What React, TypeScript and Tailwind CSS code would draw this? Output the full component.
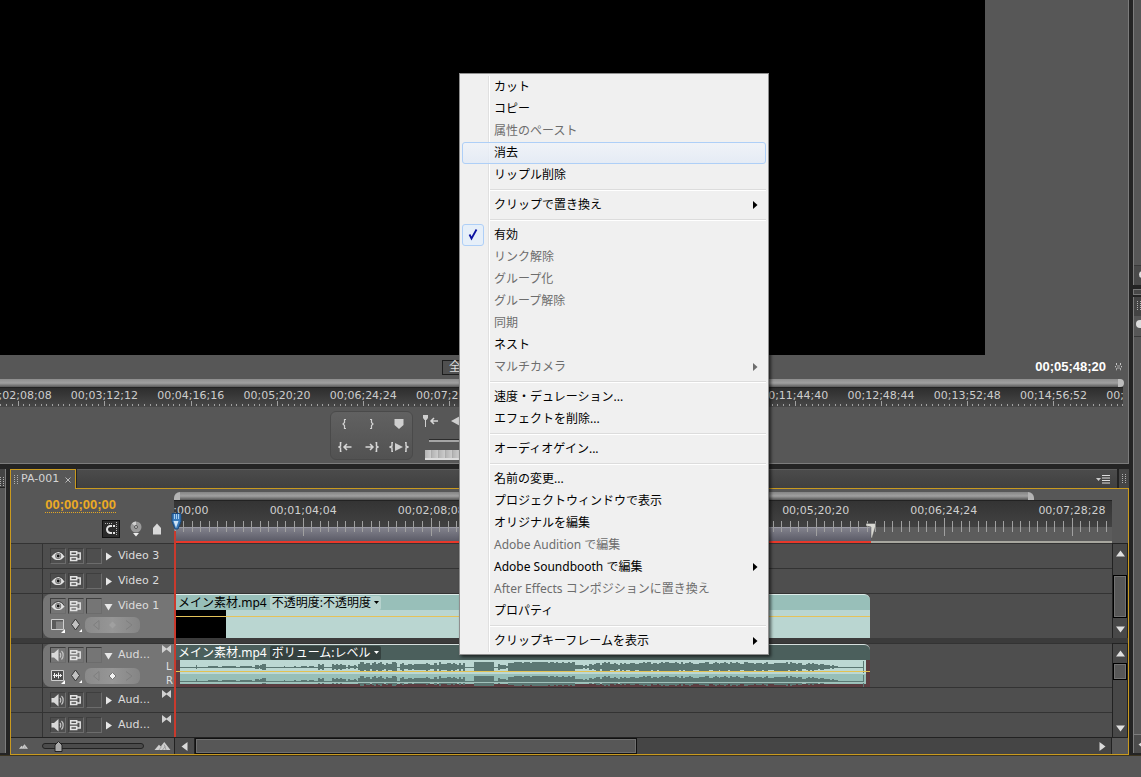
import { ReactNode } from "react";
import clsx from "clsx";

type MenuEntry = { label: string; disabled?: boolean; submenu?: boolean; checked?: boolean; active?: boolean } | "sep";

const MENU: MenuEntry[] = [
  { label: "カット" },
  { label: "コピー" },
  { label: "属性のペースト", disabled: true },
  { label: "消去", active: true },
  { label: "リップル削除" },
  "sep",
  { label: "クリップで置き換え", submenu: true },
  "sep",
  { label: "有効", checked: true },
  { label: "リンク解除", disabled: true },
  { label: "グループ化", disabled: true },
  { label: "グループ解除", disabled: true },
  { label: "同期", disabled: true },
  { label: "ネスト" },
  { label: "マルチカメラ", disabled: true, submenu: true },
  "sep",
  { label: "速度・デュレーション..." },
  { label: "エフェクトを削除..." },
  "sep",
  { label: "オーディオゲイン..." },
  "sep",
  { label: "名前の変更..." },
  { label: "プロジェクトウィンドウで表示" },
  { label: "オリジナルを編集" },
  { label: "Adobe Audition で編集", disabled: true },
  { label: "Adobe Soundbooth で編集", submenu: true },
  { label: "After Effects コンポジションに置き換え", disabled: true },
  { label: "プロパティ" },
  "sep",
  { label: "クリップキーフレームを表示", submenu: true },
];

const MONITOR_TIMES = [
  "00;02;08;08", "00;03;12;12", "00;04;16;16", "00;05;20;20", "00;06;24;24", "00;07;28;28", "00;08;32;32",
  "00;09;36;36", "00;10;40;38", "00;11;44;40", "00;12;48;44", "00;13;52;48", "00;14;56;52", "00;16;00;56",
];

const SEQUENCE_TIMES = [
  "00;00;00;00", "00;01;04;04", "00;02;08;08", "00;03;12;12", "00;04;16;16", "00;05;20;20", "00;06;24;24", "00;07;28;28",
];

// start, end, amplitude, jitter (px along the clip)
const WAVE_SEGMENTS: [number, number, number, number][] = [
  [20, 21, 2, 0], [32, 42, 1, 1], [46, 60, 1, 1], [64, 76, 1, 1], [79, 84, 2, 1], [84, 90, 4, 2],
  [108, 109, 1, 0], [118, 120, 1, 0], [125, 131, 1, 1], [133, 138, 1, 1], [142, 148, 3, 1], [163, 164, 1, 0],
  [156, 170, 3, 1], [172, 181, 2, 1], [182, 221, 5, 3], [224, 242, 4, 2], [242, 259, 4, 2], [259, 289, 5, 3],
  [298, 318, 5, 0], [322, 332, 3, 2], [332, 399, 5, 1], [399, 414, 3, 2], [414, 455, 5, 3], [455, 544, 5, 2],
  [544, 626, 5, 2], [626, 648, 4, 2], [648, 662, 2, 1], [687, 688, 6, 0],
];

function wavePath(center: number) {
  let d = `M4 ${center}h684v1h-684z`;
  for (const [from, to, amp, jitter] of WAVE_SEGMENTS) {
    for (let x = from; x < to; x += 2) {
      const noise = Math.abs(Math.sin(x * 12.9898) * 43758.5453) % 1;
      const a = Math.max(1, amp - Math.round(noise * jitter));
      d += `M${x} ${center - a}h${to - x < 2 ? 1 : 2}v${a * 2}h-${to - x < 2 ? 1 : 2}z`;
    }
  }
  return d;
}

/* ---------- icons ---------- */

const EyeIcon = () => (
  <svg width="14" height="14" viewBox="0 0 14 14" className="shrink-0">
    <path d="M0.500 7.500C3 4 5 3 7.300 3S11.500 4.500 13.500 7.500C11 10.500 9.300 11 7 11S2.500 10.500 0.500 7.500z" fill="#e2e2e2" />
    <circle cx="7.200" cy="7" r="3" fill="#6a6a6a" />
    <circle cx="7.200" cy="7" r="2.200" fill="#b5b5b5" />
    <circle cx="7.200" cy="7" r="1.400" fill="#161616" />
    <path d="M1 6.500C3 3.500 5.500 2.500 7.500 2.500S12 4 13 6.500" fill="none" stroke="#444" />
  </svg>
);

const SpeakerIcon = () => (
  <svg width="14" height="14" viewBox="0 0 14 14" className="shrink-0">
    <path d="M0.500 5h2.500L7.500 1v12.500L3 9.500H0.500z" fill="#d8d8d8" />
    <path d="M9 5c1 1 1 3.500 0 4.500M10.500 3c2.200 2 2.200 6.500 0 8.500" fill="none" stroke="#c6c6c6" strokeWidth="1.200" />
  </svg>
);

const FilmIcon = () => (
  <svg width="14" height="14" viewBox="0 0 14 14" fill="none" stroke="#e2e2e2" strokeWidth="1.500" className="shrink-0">
    <path d="M1.700 2.700h6v3h-6zM1.700 8.500h6v3h-6zM7.700 4h3.500v6H7.700" />
  </svg>
);

const Tri = ({ open }: { open?: boolean }) => (
  <svg width="9" height="9" viewBox="0 0 9 9">
    <path d={open ? "M0.500 2h8L4.500 8.500z" : "M2 0.500v8L8 4.500z"} fill="#e8e8e8" />
  </svg>
);

const ArrowUp = () => <svg width="11" height="7" viewBox="0 0 11 7"><path d="M5.500 0.500L10 6.500H1z" fill="#e0e0e0" /></svg>;
const ArrowDown = () => <svg width="11" height="7" viewBox="0 0 11 7"><path d="M5.500 6.500L10 0.500H1z" fill="#e0e0e0" /></svg>;

const BowTie = () => (
  <svg width="9" height="8" viewBox="0 0 9 8"><path d="M0 0l4.500 3.500L9 0v8L4.500 4.500 0 8z" fill="#d0d0d0" /></svg>
);

const Grip = () => (
  <svg width="4" height="10" viewBox="0 0 4 10" fill="#b0b0b0" shapeRendering="crispEdges">
    {[0, 2, 4, 6, 8].map((y) => (
      <path key={y} d={`M0 ${y}h1v1h-1zM3 ${y}h1v1h-1z`} />
    ))}
  </svg>
);

const Mountains = ({ w, h }: { w: number; h: number }) => (
  <svg width={w} height={h} viewBox="0 0 18 9">
    <path d="M0 9L5 3l2 2 4-5 7 9z" fill="#cfcfcf" />
    <path d="M5 9l3-4M9 9l3-4M13 9L11 3" stroke="#999" fill="none" />
  </svg>
);

/* ---------- shared pieces ---------- */

function Cell({ label, children }: { label: string; children?: ReactNode }) {
  return (
    <button aria-label={label} className="flex size-4 items-center justify-center border border-[#3f3f3f] border-r-[#6c6c6c] border-b-[#6c6c6c]">
      {children}
    </button>
  );
}

function Ticks({ top, bottom, majorTop, majorBottom }: { top: number; bottom: number; majorTop: number; majorBottom: number }) {
  return (
    <svg className="absolute inset-0 size-full" shapeRendering="crispEdges">
      {Array.from({ length: 15 }, (_, i) => {
        const x = `${((i + 0.5) / 15) * 100}%`;
        const major = i === 7;
        return <line key={i} x1={x} x2={x} y1={major ? majorTop : top} y2={major ? majorBottom : bottom} stroke="#a0a0a0" />;
      })}
    </svg>
  );
}

function ScrollColumn({ label, before, thumb }: { label: string; before: string; thumb: string }) {
  return (
    <div className="flex w-[16px] shrink-0 flex-col border-x border-t border-[#222] bg-[#484848]">
      <button aria-label={`${label} up`} className="flex h-[18px] items-center justify-center"><ArrowUp /></button>
      <div className={before} />
      <div className={clsx("border border-black bg-[#575757] outline-1 -outline-offset-2 outline-[#727272]", thumb)} />
      <div className="flex-1" />
      <button aria-label={`${label} down`} className="flex h-[18px] items-center justify-center"><ArrowDown /></button>
    </div>
  );
}

function KeyframeRow({ audio }: { audio?: boolean }) {
  return (
    <div className="flex items-center">
      <button aria-label="Display style" className="w-4">
        <svg width="16" height="16" viewBox="0 0 16 16">
          <path d="M1.500 2.500h12v10h-12z" fill={audio ? "#4c4c4c" : "#848484"} stroke="#d0d0d0" />
          {audio ? (
            <path d="M3 7.500h9M4.500 5v5M6.500 6v3M8.500 4.500v6M10.500 6v3" stroke="#eee" />
          ) : (
            <path d="M2 3h11v1.500H2zM2 4h4v8H2z" fill="#5a5a5a" />
          )}
          <path d="M15 12v4h-4z" fill="#fff" />
        </svg>
      </button>
      <button aria-label="Show keyframes" className="ml-[3px] w-4">
        <svg width="16" height="16" viewBox="0 0 16 16">
          <path d="M6.500 2L10.500 7.500 6.500 13 2.500 7.500z" fill="#c2c2c2" stroke="#383838" />
          <path d="M13 12v3h-3z" fill="#fff" />
        </svg>
      </button>
      <div className="flex h-4 w-[55px] items-center justify-center rounded-md bg-linear-to-r from-[#8a8a8a] via-[#969696] to-[#858585]">
        <svg width="41" height="12" viewBox="0 0 41 12">
          <path d="M7 1.500v9L1.500 6zM34 1.500L40 6l-6 4.500" fill="none" stroke="#7f7f7f" />
          <path d="M20.500 2.500L24 6l-3.500 3.500L17 6z" fill={audio ? "#f2f2f2" : "#a0a0a0"} stroke={audio ? "#777" : "none"} />
        </svg>
      </div>
    </div>
  );
}

function Track({ name, audio, open, children }: { name: string; audio?: boolean; open?: boolean; children?: ReactNode }) {
  return (
    <div className={clsx("flex border-t border-[#333]", !open && "h-[25px]", open && (audio ? "h-[44px]" : "h-[45px]"))}>
      <div className="w-8 shrink-0 border-r border-[#333]" />
      <div
        className={clsx(
          "flex w-[132px] shrink-0 flex-col gap-[3px] border-r border-[#333] pl-[7px]",
          audio && open ? "pt-[3px]" : "pt-1",
          open && "rounded-l-lg bg-[#757575]",
        )}
      >
        <div className="flex items-center gap-[2px]">
          <Cell label={audio ? "Toggle audio output" : "Toggle video output"}>{audio ? <SpeakerIcon /> : <EyeIcon />}</Cell>
          <Cell label="Sync lock"><FilmIcon /></Cell>
          <Cell label="Track lock" />
          <button aria-label={open ? "Collapse" : "Expand"}><Tri open={open} /></button>
          <span className="ml-[3px] flex-1 text-[11px] leading-4 text-[#dcdcdc]">{name}</span>
          {audio && <span className="-mt-3 mr-[3px]"><BowTie /></span>}
        </div>
        {open && (
          <div className="flex justify-between">
            <KeyframeRow audio={audio} />
            {audio && (
              <div className="-mt-1 mr-px flex flex-col gap-1 text-[10px] leading-[10px] text-[#e0e0e0]">
                <span>L</span>
                <span>R</span>
              </div>
            )}
          </div>
        )}
      </div>
      <div className="min-w-0 flex-1 bg-[#4e4e4e]">{children}</div>
    </div>
  );
}

function ClipTitle({ effect, dark }: { effect: string; dark?: boolean }) {
  return (
    <div
      className={clsx(
        "flex h-4 items-center gap-[3px] rounded-tr-md border-t pl-[2px] font-['Noto_Sans','Noto_Sans_CJK_JP',sans-serif] text-[12px] whitespace-nowrap",
        dark ? "border-[#d5dfdd] bg-[#4b5f5c] text-white" : "border-[#dcebe8] bg-[#98bfb9] text-black",
      )}
    >
      <span className="leading-[14px]">メイン素材.mp4</span>
      <button className={clsx("flex h-[14px] items-center gap-[3px] rounded-xs px-[2px] leading-[14px]", dark ? "bg-[#35413f]" : "bg-[#b6d2cd]")}>
        {effect}
        <svg width="5" height="3" viewBox="0 0 5 3"><path d="M0 0h5L2.500 3z" fill="currentColor" /></svg>
      </button>
    </div>
  );
}

/* ---------- panels ---------- */

function MonitorPanel() {
  return (
    <section className="border-r border-b border-[#7c7c7c] bg-[#575757]">
      <div className="mr-[143px] h-[355px] bg-black" />
      <div className="flex h-6 items-center justify-end pr-[5px]">
        <div className="flex flex-1 pl-[442px]">
          <button className="h-[15px] w-[90px] border border-[#1d1d1d] bg-[#505050] pl-[6px] text-left text-[12px] leading-[13px] text-[#ddd]">全体表示</button>
        </div>
        <span className="font-['Liberation_Sans',sans-serif] text-[13px] leading-4 font-bold text-white">00;05;48;20</span>
        <svg className="ml-2" width="9" height="10" viewBox="0 0 9 10">
          <path d="M3 3h3v4H3z" fill="#808080" />
          <path d="M2.500 1v2.500L1 5l1.500 1.500V9M6.500 1v2.500L8 5 6.500 6.500V9" stroke="#c4c4c4" fill="none" strokeDasharray="2 1" />
        </svg>
      </div>
      <div className="mr-1 h-2 rounded-r-md border-r-6 border-[#bdbdbd] bg-linear-to-b from-[#8e8e8e] via-[#a0a0a0] to-[#5a5a5a]" />
      <div className="mr-[5px] h-5 overflow-hidden border-t border-[#232323] bg-linear-to-b from-[#2e2e2e] to-[#484848]">
        <div className="-mr-[60px] -ml-[25px] grid grid-cols-14">
          {MONITOR_TIMES.map((t) => (
            <div key={t} className="relative h-[19px] text-center text-[11px] leading-[15px] text-[#cdcdcd]">
              {t}
              <Ticks top={16} bottom={18} majorTop={13} majorBottom={18} />
            </div>
          ))}
        </div>
      </div>
      <div className="flex h-14 items-start gap-2 pt-1 pl-[330px]">
        <div className="grid h-[49px] w-[83px] grid-cols-3 items-center justify-items-center rounded-md border border-[#4a4a4a] bg-linear-to-b from-[#616161] to-[#525252]">
          <button aria-label="Set in point"><svg width="8" height="10" viewBox="0 0 8 10"><path d="M5 0.500H3.500v3L2 5l1.500 1.500v3H5" stroke="#d0d0d0" strokeWidth="1.200" fill="none" /></svg></button>
          <button aria-label="Set out point"><svg width="8" height="10" viewBox="0 0 8 10"><path d="M2 0.500h1.500v3L5 5 3.500 6.500v3H2" stroke="#d0d0d0" strokeWidth="1.200" fill="none" /></svg></button>
          <button aria-label="Set marker"><svg width="10" height="10" viewBox="0 0 10 10"><path d="M0.500 0h9v6L5 10 0.500 6z" fill="#cfcfcf" /></svg></button>
          <button aria-label="Go to in point"><svg width="14" height="10" viewBox="0 0 14 10"><path d="M3.500 0.500H2.500v3.500L1 5l1.500 1v3.500h1M13.500 5H6M9 2L6 5l3 3" stroke="#d6d6d6" strokeWidth="1.500" fill="none" /></svg></button>
          <button aria-label="Go to out point"><svg width="14" height="10" viewBox="0 0 14 10"><path d="M10.500 0.500h1v3.500l1.500 1-1.500 1v3.500h-1M0.500 5H8M5 2l3 3-3 3" stroke="#d6d6d6" strokeWidth="1.500" fill="none" /></svg></button>
          <button aria-label="Play in to out"><svg width="20" height="10" viewBox="0 0 20 10"><path d="M4 0.500H3v3.500L1 5l2 1v3.500h1M16 0.500h1v3.500l2 1-2 1v3.500h-1" stroke="#d6d6d6" strokeWidth="1.400" fill="none" /><path d="M6 1l8 4-8 4z" fill="#cfcfcf" /></svg></button>
        </div>
        <div className="flex w-[200px] flex-col">
          <div className="flex h-5 items-center gap-3">
            <button aria-label="Previous marker" className="ml-px"><svg width="16" height="12" viewBox="0 0 16 12"><path d="M1 0h5v3L4.500 5h-2L1 3zM3 5h1v7H3z" fill="#cfcfcf" /><path d="M16 6H9M12 3L9 6l3 3" stroke="#d6d6d6" strokeWidth="1.500" fill="none" /></svg></button>
            <button aria-label="Step back"><svg width="12" height="12" viewBox="0 0 12 12"><path d="M12 0v12L1 6z" fill="#d0d0d0" /></svg></button>
          </div>
          <div className="mt-2 ml-2 h-[3px] border-t border-[#2c2c2c] bg-[#a5a5a5]" />
          <div className="mt-2 ml-1 h-[10px] border-b-2 border-[#ddd] bg-[repeating-linear-gradient(90deg,#b4b4b4_0px,#cccccc_6px,#8a8a8a_7px)]" />
        </div>
      </div>
    </section>
  );
}

function TimelineHeader() {
  return (
    <div className="flex h-[54px]">
      <div className="flex w-[163px] shrink-0 flex-col items-end pt-[9px] pr-3">
        <button className="mr-[46px] border-b border-dotted border-[#e5a823] font-['Liberation_Sans',sans-serif] text-[13px] leading-[14px] font-bold text-[#edab24]">
          00;00;00;00
        </button>
        <div className="mt-[7px] flex items-center gap-[9px]">
          <button aria-label="Snap" className="flex size-[18px] items-center justify-center border border-[#111] bg-[#2b2b2b]">
            <svg width="16" height="16" viewBox="0 0 16 16" className="shrink-0"><path d="M12 5H7.500a3.400 3.400 0 000 7H12" stroke="#e2e2e2" strokeWidth="2" fill="none" /><path d="M9.500 3.500v3M9.500 10.500v3" stroke="#2b2b2b" /><path d="M13.500 1v14M2 2.500h7" stroke="#b5b5b5" strokeDasharray="1 1" /></svg>
          </button>
          <button aria-label="Set encore chapter marker">
            <svg width="14" height="16" viewBox="0 0 14 16"><circle cx="7" cy="6" r="5.500" fill="#9a9a9a" /><path d="M7 6L3 2.500A5.500 5.500 0 017 0.500z" fill="#d0d0d0" /><circle cx="7" cy="6" r="1.500" fill="#ccc" stroke="#555" /><path d="M4 12h6l-3 3.500z" fill="#eee" /></svg>
          </button>
          <button aria-label="Set unnumbered marker">
            <svg width="10" height="12" viewBox="0 0 10 12"><path d="M1 5l4-4.500L9 5v6.500H1z" fill="#d8d8d8" /></svg>
          </button>
        </div>
      </div>
      <div className="flex min-w-0 flex-1 flex-col pt-[3px]">
        <div className="mr-[78px] h-2 rounded-t-md border-x-6 border-[#b4b4b4] bg-linear-to-b from-[#858585] via-[#a0a0a0] to-[#555]" />
        <div className="relative flex-1 overflow-hidden">
          <div className="h-[27px] border-t border-[#222] bg-linear-to-b from-[#343434] to-[#424242]" />
          <div className="flex h-[14px] bg-[#5c5c5c]">
            <div className="w-[697px] border-t border-[#9a9aa5] bg-linear-to-b from-[#82828c] to-[#5c5c68]" />
          </div>
          <div className="flex h-[2px]">
            <div className="w-[697px] bg-[#e8382a]" />
            <div className="flex-1 bg-[#a8a79f]" />
          </div>
          <div className="absolute inset-x-0 top-0 overflow-hidden">
            <div className="-mr-[24px] -ml-[63px] grid grid-cols-8">
              {SEQUENCE_TIMES.map((t) => (
                <div key={t} className="relative h-9 pt-[3px] text-center text-[11px] leading-4 text-[#d0d0d0]">
                  {t}
                  <Ticks top={21} bottom={32} majorTop={18} majorBottom={36} />
                </div>
              ))}
            </div>
          </div>
          {/* work area end handle */}
          <svg className="absolute top-[23px] left-[692px]" width="10" height="16" viewBox="0 0 10 16">
            <path d="M0 0.500h9.500v3L6 15H5V4L0 3z" fill="#d8d8d2" stroke="#555" strokeWidth="0.500" />
          </svg>
        </div>
      </div>
      <div className="w-4 shrink-0" />
    </div>
  );
}

function TimelinePanel() {
  return (
    <section className="flex min-w-0 flex-1 flex-col">
      <div className="flex h-[19px] items-stretch">
        <div className="z-10 -mb-px flex w-[66px] items-center gap-[3px] border border-b-0 border-[#c99a1f] bg-[#575757] pl-[3px] text-[11px] text-[#d4d4d4]">
          <Grip />
          PA-001
          <button aria-label="Close" className="ml-[3px]">
            <svg width="6" height="6" viewBox="0 0 6 6"><path d="M0.500 0.500l5 5M5.500 0.500l-5 5" stroke="#bbb" /></svg>
          </button>
        </div>
        <div className="ml-px flex flex-1 items-center justify-end border-t border-[#5c5c5c] bg-linear-to-b from-[#4b4b4b] to-[#404040] pr-[7px]">
          <button aria-label="Panel menu">
            <svg width="14" height="9" viewBox="0 0 14 9"><path d="M0 3h5L2.500 6z" fill="#ccc" /><path d="M6 .5h8M6 3h8M6 5.500h8M6 8h8" stroke="#ddd" /></svg>
          </button>
        </div>
        <div className="flex w-3 items-center justify-center border-l-2 border-[#222] bg-[#454545]"><Grip /></div>
      </div>

      <div className="relative flex flex-col border border-[#c99a1f] bg-[#4e4e4e]">
        <div className="bg-[#575757]"><TimelineHeader /></div>

        <div className="flex">
          <div className="min-w-0 flex-1">
            <Track name="Video 3" />
            <Track name="Video 2" />
            <Track name="Video 1" open>
              <div className="ml-px flex h-[44px] w-[694px] flex-col">
                <ClipTitle effect="不透明度:不透明度" />
                <div className="relative flex flex-1 bg-[#bad6d1]">
                  <div className="w-[50px] bg-black" />
                  <div className="absolute inset-x-0 top-[6px] h-px bg-[#e5c25a]" />
                </div>
              </div>
            </Track>
          </div>
          <ScrollColumn label="Video tracks" before="h-[13px]" thumb="h-[43px]" />
        </div>

        <div className="h-[5px] bg-[#3b3b3b]" />

        <div className="flex">
          <div className="min-w-0 flex-1">
            <Track name="Aud..." audio open>
              <div className="ml-px w-[694px]">
                <ClipTitle effect="ボリューム:レベル" dark />
                <svg className="block w-full" height="27" viewBox="0 0 694 27" preserveAspectRatio="none" shapeRendering="crispEdges">
                  <rect width="694" height="27" fill="#5b3d41" />
                  <rect x="4" width="686" height="14" fill="#bcd8d3" />
                  <rect x="4" y="14" width="686" height="10" fill="#97bfb8" />
                  <path d={wavePath(7)} fill="#5b7773" />
                  <path d={wavePath(21)} fill="#5b7773" />
                  <rect x="4" y="22" width="686" height="1" fill="#a3c2bc" />
                  <rect y="11" width="694" height="1" fill="#e3c251" />
                </svg>
              </div>
            </Track>
            <Track name="Aud..." audio />
            <Track name="Aud..." audio />
          </div>
          <ScrollColumn label="Audio tracks" before="h-px" thumb="h-[17px]" />
        </div>

        <div className="flex h-[17px] border-t border-[#222] bg-[#575757]">
          <div className="flex w-[163px] shrink-0 items-center pl-2">
            <Mountains w={9} h={5} />
            <div className="relative mr-[10px] ml-[14px] h-[6px] w-[102px] rounded-sm border border-[#222] bg-[#4b4b4b]">
              <svg className="absolute -top-[3px] left-[11px]" width="9" height="11" viewBox="0 0 9 11"><path d="M1 4l3.500-3.500L8 4v6.500H1z" fill="#aaa" stroke="#222" /></svg>
            </div>
            <Mountains w={17} h={8} />
          </div>
          <button aria-label="Scroll left" className="flex w-[21px] items-center justify-center border-x border-[#222] bg-[#4c4c4c]">
            <svg width="7" height="9" viewBox="0 0 7 9"><path d="M6.500 0v9L0.500 4.500z" fill="#dadada" /></svg>
          </button>
          <div className="flex flex-1 bg-[#454545]">
            <div className="w-[442px] border border-[#111] bg-[#575757] outline-1 -outline-offset-2 outline-[#707070]" />
          </div>
          <button aria-label="Scroll right" className="flex w-[19px] items-center justify-center border-r border-[#222] bg-[#454545]">
            <svg width="7" height="9" viewBox="0 0 7 9"><path d="M0.500 0v9L6.500 4.500z" fill="#dadada" /></svg>
          </button>
          <div className="w-4" />
        </div>

        {/* playhead */}
        <div className="absolute top-[24px] bottom-[17px] left-[160px] z-10 flex w-[11px] flex-col">
          <svg className="shrink-0" width="11" height="18" viewBox="0 0 11 18">
            <path d="M1 0.500h9v8L7 16H4L1 8.500z" fill="#3979b8" stroke="#1d4878" />
            <path d="M3.500 1v5M5.500 1v5M7.500 1v5" stroke="#a6cdf0" />
            <path d="M2.500 8h5l-2.500 7z" fill="#cfe3f5" />
          </svg>
          <div className="ml-[3px] w-[2px] flex-1 bg-[#c93a2d]" />
        </div>
      </div>
    </section>
  );
}

function SidePanel() {
  return (
    <aside className="flex w-3 shrink-0 flex-col border-l-4 border-[#242424] bg-[#242424]">
      <div className="h-[285px] overflow-hidden border-l border-[#7c7c7c] bg-[#575757] pt-[265px]">
        <div className="border-t border-[#3a3a3a] bg-[#4a4a4a] pt-[5px] pb-2 pl-[5px]"><div className="size-[7px] rounded-full bg-[#ddd]" /></div>
      </div>
      <div className="mt-1 h-[6px] border border-r-0 border-[#777] bg-[#484848]" />
      <div className="mt-[2px] flex-1 overflow-hidden border-l border-[#7c7c7c] bg-[#575757]">
        <div className="h-[19px] bg-[#444] pt-1 pl-[3px]"><Grip /></div>
        <div className="h-[21px] border-b border-[#3a3a3a] pt-1 pl-[2px]"><div className="size-[8px] rounded-full bg-[#ddd]" /></div>
      </div>
      <div className="mb-[2px] h-[19px] border-t border-l border-[#7c7c7c] bg-[#4c4c4c] pt-[5px] pl-1">
        <svg width="7" height="9" viewBox="0 0 7 9"><path d="M6.500 0v9L0.500 4.500z" fill="#dadada" /></svg>
      </div>
    </aside>
  );
}

function ContextMenu() {
  return (
    <div
      role="menu"
      className="absolute top-[73px] left-[459px] z-20 w-[310px] border border-[#8f8f8f] bg-[#f0f0f0] p-[2px] text-[12px] shadow-[2px_2px_3px_rgba(0,0,0,0.6)]"
    >
      <div className="absolute inset-y-[2px] left-[28px] w-[2px] border-l border-[#e0e0e0] bg-white" />
      {MENU.map((m, i) =>
        m === "sep" ? (
          <div key={i} role="separator" className="ml-[28px] h-2 pt-[3px]">
            <div className="h-[2px] border-t border-[#dcdcdc] bg-white" />
          </div>
        ) : (
          <button
            key={m.label}
            role="menuitem"
            disabled={m.disabled}
            className={clsx(
              "relative flex h-[22px] w-full items-center rounded-[3px] border text-left",
              m.active ? "border-[#aecff7] bg-linear-to-b from-[#eff3f9]/80 to-[#e2eaf6]/80" : "border-transparent",
              m.disabled ? "text-[#6d6d6d]" : "text-black",
            )}
          >
            <span className="w-[31px] shrink-0">
              {m.checked && (
                <span className="-ml-px flex size-[22px] items-center justify-center rounded-[3px] border border-[#aecff7] bg-[#e6eff9]">
                  <svg width="10" height="12" viewBox="0 0 10 12"><path d="M1.500 5.500l2 4L8.500 0.500" stroke="#0c12a1" strokeWidth="1.800" fill="none" /></svg>
                </span>
              )}
            </span>
            <span className="flex-1 leading-5">{m.label}</span>
            {m.submenu && (
              <svg className="mr-[7px]" width="5" height="8" viewBox="0 0 5 8"><path d="M0 0l4.500 4L0 8z" fill="currentColor" /></svg>
            )}
          </button>
        ),
      )}
    </div>
  );
}

export default function App() {
  return (
    <div className="relative flex min-h-screen flex-col overflow-hidden bg-[#575757] font-['DejaVu_Sans','Noto_Sans_CJK_JP',sans-serif]">
      <div className="flex bg-[#242424]">
        <div className="min-w-0 flex-1">
          <MonitorPanel />
          <div className="flex pt-[5px]">
            <div className="mr-1 mb-[2px] flex w-[6px] shrink-0 flex-col border-r border-[#7c7c7c] bg-[#575757]">
              <div className="h-[19px] border-b border-[#222] bg-[#444] pt-2"><Grip /></div>
            </div>
            <TimelinePanel />
          </div>
        </div>
        <SidePanel />
      </div>
      <div className="flex-1 border-t border-[#3c3420]" />
      <div className="font-['Noto_Sans','Noto_Sans_CJK_JP',sans-serif]"><ContextMenu /></div>
    </div>
  );
}
